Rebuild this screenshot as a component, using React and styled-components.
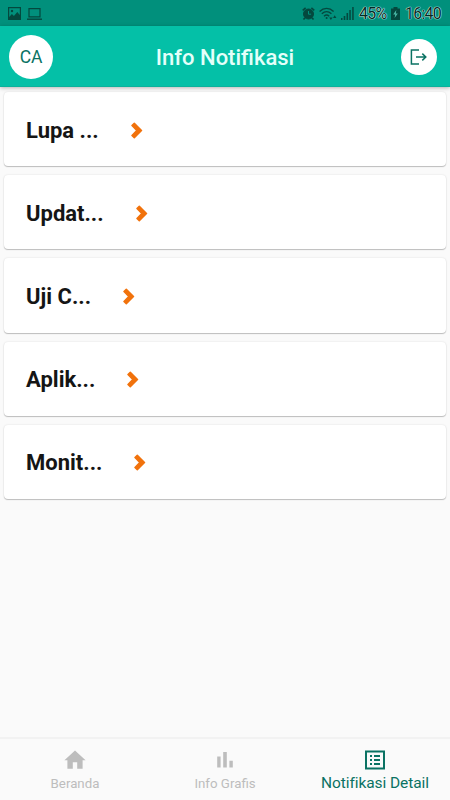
import React from 'react';
import styled, { createGlobalStyle } from 'styled-components';

const GlobalStyle = createGlobalStyle`
    * {
        box-sizing: border-box;
    }

    body {
        margin: 0;
        background-color: #fafafa;
        font-family: Roboto, "Liberation Sans", sans-serif;
    }
`

const Screen = styled.div`
    display: flex;
    flex-direction: column;
    height: 100vh;
    overflow: hidden;
    background-color: #fafafa;
`

const StatusBar = styled.div`
    display: flex;
    flex: none;
    justify-content: space-between;
    height: 26px;
    padding: 0 10px 0 8px;
    background-color: #01907c;
    color: #04483e;
`

const StatusGroup = styled.div`
    display: flex;
    align-items: center;
    height: 27px;
    gap: ${({ $gap }) => $gap}px;
`

const StatusText = styled.span`
    width: ${({ $width }) => $width}px;
    margin-left: ${({ $indent }) => $indent}px;
    padding-top: 1px;
    font-size: 16px;
    line-height: 18px;
    letter-spacing: -0.8px;
    white-space: nowrap;
    color: #042a24;
    text-shadow: 0 0 1px #d8fff8, 0 0 1px #d8fff8, 0 0 1px #d8fff8;
`

const Header = styled.header`
    display: flex;
    flex: none;
    align-items: center;
    justify-content: space-between;
    position: relative;
    height: 61px;
    padding: 1px 13px 0 9px;
    background-color: #04c0a7;
    border-bottom: 1px solid #0bb19b;
    box-shadow: 0 1px 4px rgba(0, 0, 0, 0.28);
`

const CircleButton = styled.button`
    display: flex;
    flex: none;
    align-items: center;
    justify-content: center;
    width: ${({ $size }) => $size}px;
    height: ${({ $size }) => $size}px;
    padding: 0;
    border: none;
    border-radius: 50%;
    background-color: #fff;
    color: #0a7263;
    font-family: inherit;
    font-size: 17.5px;
    letter-spacing: -0.2px;
    cursor: pointer;
`

const Title = styled.h1`
    margin: 2px 4px 0 0;
    font-size: 22px;
    font-weight: 500;
    line-height: 26px;
    color: #e4fffa;
`

const List = styled.main`
    display: flex;
    flex: 1;
    flex-direction: column;
    gap: 9px;
    padding: 5px 4px 0;
`

const Card = styled.div`
    display: flex;
    flex: none;
    align-items: center;
    height: 74.2px;
    padding: 2px 0 0 22px;
    gap: 32px;
    border-radius: 4px;
    background-color: #fff;
    box-shadow: 0 1px 1px rgba(0, 0, 0, 0.22), 0 0 2px rgba(0, 0, 0, 0.12);
`

const CardTitle = styled.span`
    padding-top: 1px;
    font-size: 22px;
    font-weight: 700;
    line-height: 28px;
    color: #151515;
`

const Nav = styled.nav`
    display: grid;
    flex: none;
    grid-template-columns: repeat(3, 1fr);
    height: 63px;
    border-top: 2px solid #f2f2f2;
    background-color: #fafafa;
`

const NavItem = styled.div`
    display: flex;
    flex-direction: column;
    align-items: center;
    padding-top: 9px;
    color: ${({ $active }) => ($active ? '#0a7263' : '#bdbdbd')};

    svg {
        flex: none;
    }
`

const NavLabel = styled.span`
    margin-top: ${({ $active }) => ($active ? 2 : 3)}px;
    font-size: ${({ $active }) => ($active ? 15.5 : 13.3)}px;
    line-height: 18px;
    letter-spacing: ${({ $active }) => ($active ? '-0.08px' : 'normal')};
    white-space: nowrap;
`

const ImageIcon = () => (
    <svg width="13" height="13" viewBox="0 0 13 13" fill="currentColor">
        <path fillRule="evenodd" d="M0 0h13v13H0zM1.2 1.2v8.9l2.7-3 2 1.9 3.4-4 2.5 3V1.2z" />
        <circle cx="4" cy="4" r="1.2" />
    </svg>
);

const LaptopIcon = () => (
    <svg width="15" height="12" viewBox="0 0 15 12" fill="none" stroke="currentColor">
        <path d="M2 .6h11v8.2H2z" strokeWidth="1.2" />
        <path d="M0 11.2h15" strokeWidth="1.4" />
    </svg>
);

const AlarmIcon = () => (
    <svg width="13" height="13" viewBox="0 0 13 13" fill="none" stroke="currentColor">
        <circle cx="6.5" cy="7" r="5" fill="currentColor" />
        <path d="M.7 3.3 3.6.9M12.3 3.3 9.4.9M3 10.8l-1.5 1.7M10 10.8l1.5 1.7" strokeWidth="1.6" />
        <path d="M6.5 4v3.2h2.6" stroke="#01907c" />
    </svg>
);

const WifiIcon = () => (
    <svg width="18" height="14" viewBox="0 0 18 14" fill="none" stroke="currentColor">
        <path d="M.6 4.4C4.8.4 10.4.4 14.6 4.4M2.8 6.8c3-2.7 6.6-2.7 9.6 0M5 9.2c1.7-1.5 3.5-1.5 5.2 0" strokeWidth="1.4" />
        <circle cx="7.6" cy="11" r="1" fill="currentColor" stroke="none" />
        <path d="M10.2 10.5h3.4l-1.7 2.6zM14 10.9h3.4l-1.7-2.6z" fill="currentColor" stroke="none" />
    </svg>
);

const SignalIcon = () => (
    <svg width="13" height="13" viewBox="0 0 13 13" fill="currentColor">
        <path d="M0 11h1.5v2H0zM2.7 9h1.6v4H2.7zM5.5 6h1.6v7H5.5zM8.3 3h1.5v10H8.3zM11.2 0h1.5v13h-1.5z" />
    </svg>
);

const BatteryIcon = () => (
    <svg width="9" height="13" viewBox="0 0 9 13">
        <path d="M2.5 0h4v1.5H9V13H0V1.5h2.5z" fill="currentColor" />
        <path d="M5.3 3 2.2 7.6h2L3.6 11l3.2-4.6h-2z" fill="#49b7a5" />
    </svg>
);

const LogoutIcon = () => (
    <svg width="18" height="16" viewBox="0 0 18 16" fill="none" stroke="currentColor" strokeWidth="1.5">
        <path d="M9 1H1.4v14H9M6 8h10M12.3 4.6 15.8 8l-3.5 3.4" />
    </svg>
);

const ChevronIcon = () => (
    <svg width="12" height="17" viewBox="0 0 12 17" fill="#f1720c" stroke="#f1720c" strokeLinejoin="round">
        <path d="M1 3.6 3.3 1.3 10.5 8.5 3.3 15.7 1 13.4 5.8 8.5z" strokeWidth="1.5" />
    </svg>
);

const HomeIcon = () => (
    <svg width="24" height="24" viewBox="0 0 24 24" fill="currentColor">
        <path d="M9.8 20.8v-6.6h4.4v6.6h5.4v-8.6h3L12 2.4 1.4 12.2h3v8.6z" />
    </svg>
);

const ChartIcon = () => (
    <svg width="24" height="24" viewBox="0 0 24 24" fill="currentColor">
        <path d="M4.2 8.6h3.4v11H4.2zM16.4 12.8h3.4v6.8h-3.4zM10.2 4h3.6v15.6h-3.6z" />
    </svg>
);

const ListIcon = () => (
    <svg width="24" height="24" viewBox="0 0 24 24" fill="currentColor">
        <path d="M11 7h6v2h-6zM11 11h6v2h-6zM11 15h6v2h-6zM7 7h2v2H7zM7 11h2v2H7zM7 15h2v2H7z" />
        <path fillRule="evenodd" d="M2 2.5h20v19H2zM4 4.5v15h16v-15z" />
    </svg>
);

const notifications = ['Lupa ...', 'Updat...', 'Uji C...', 'Aplik...', 'Monit...'];

const tabs = [
    { label: 'Beranda', Icon: HomeIcon },
    { label: 'Info Grafis', Icon: ChartIcon },
    { label: 'Notifikasi Detail', Icon: ListIcon, active: true },
];

const App = () => {
    return (
        <Screen>
            <GlobalStyle />
            <StatusBar>
                <StatusGroup $gap={6}>
                    <ImageIcon />
                    <LaptopIcon />
                </StatusGroup>
                <StatusGroup $gap={4}>
                    <AlarmIcon />
                    <WifiIcon />
                    <SignalIcon />
                    <StatusText $width={28} $indent={1}>45%</StatusText>
                    <BatteryIcon />
                    <StatusText $width={35} $indent={1}>16:40</StatusText>
                </StatusGroup>
            </StatusBar>
            <Header>
                <CircleButton $size={44}>CA</CircleButton>
                <Title>Info Notifikasi</Title>
                <CircleButton $size={36}>
                    <LogoutIcon />
                </CircleButton>
            </Header>
            <List>
                {notifications.map((text) => (
                    <Card key={text}>
                        <CardTitle>{text}</CardTitle>
                        <ChevronIcon />
                    </Card>
                ))}
            </List>
            <Nav>
                {tabs.map(({ label, Icon, active }) => (
                    <NavItem key={label} $active={active}>
                        <Icon />
                        <NavLabel $active={active}>{label}</NavLabel>
                    </NavItem>
                ))}
            </Nav>
        </Screen>
    );
};

export default App;
